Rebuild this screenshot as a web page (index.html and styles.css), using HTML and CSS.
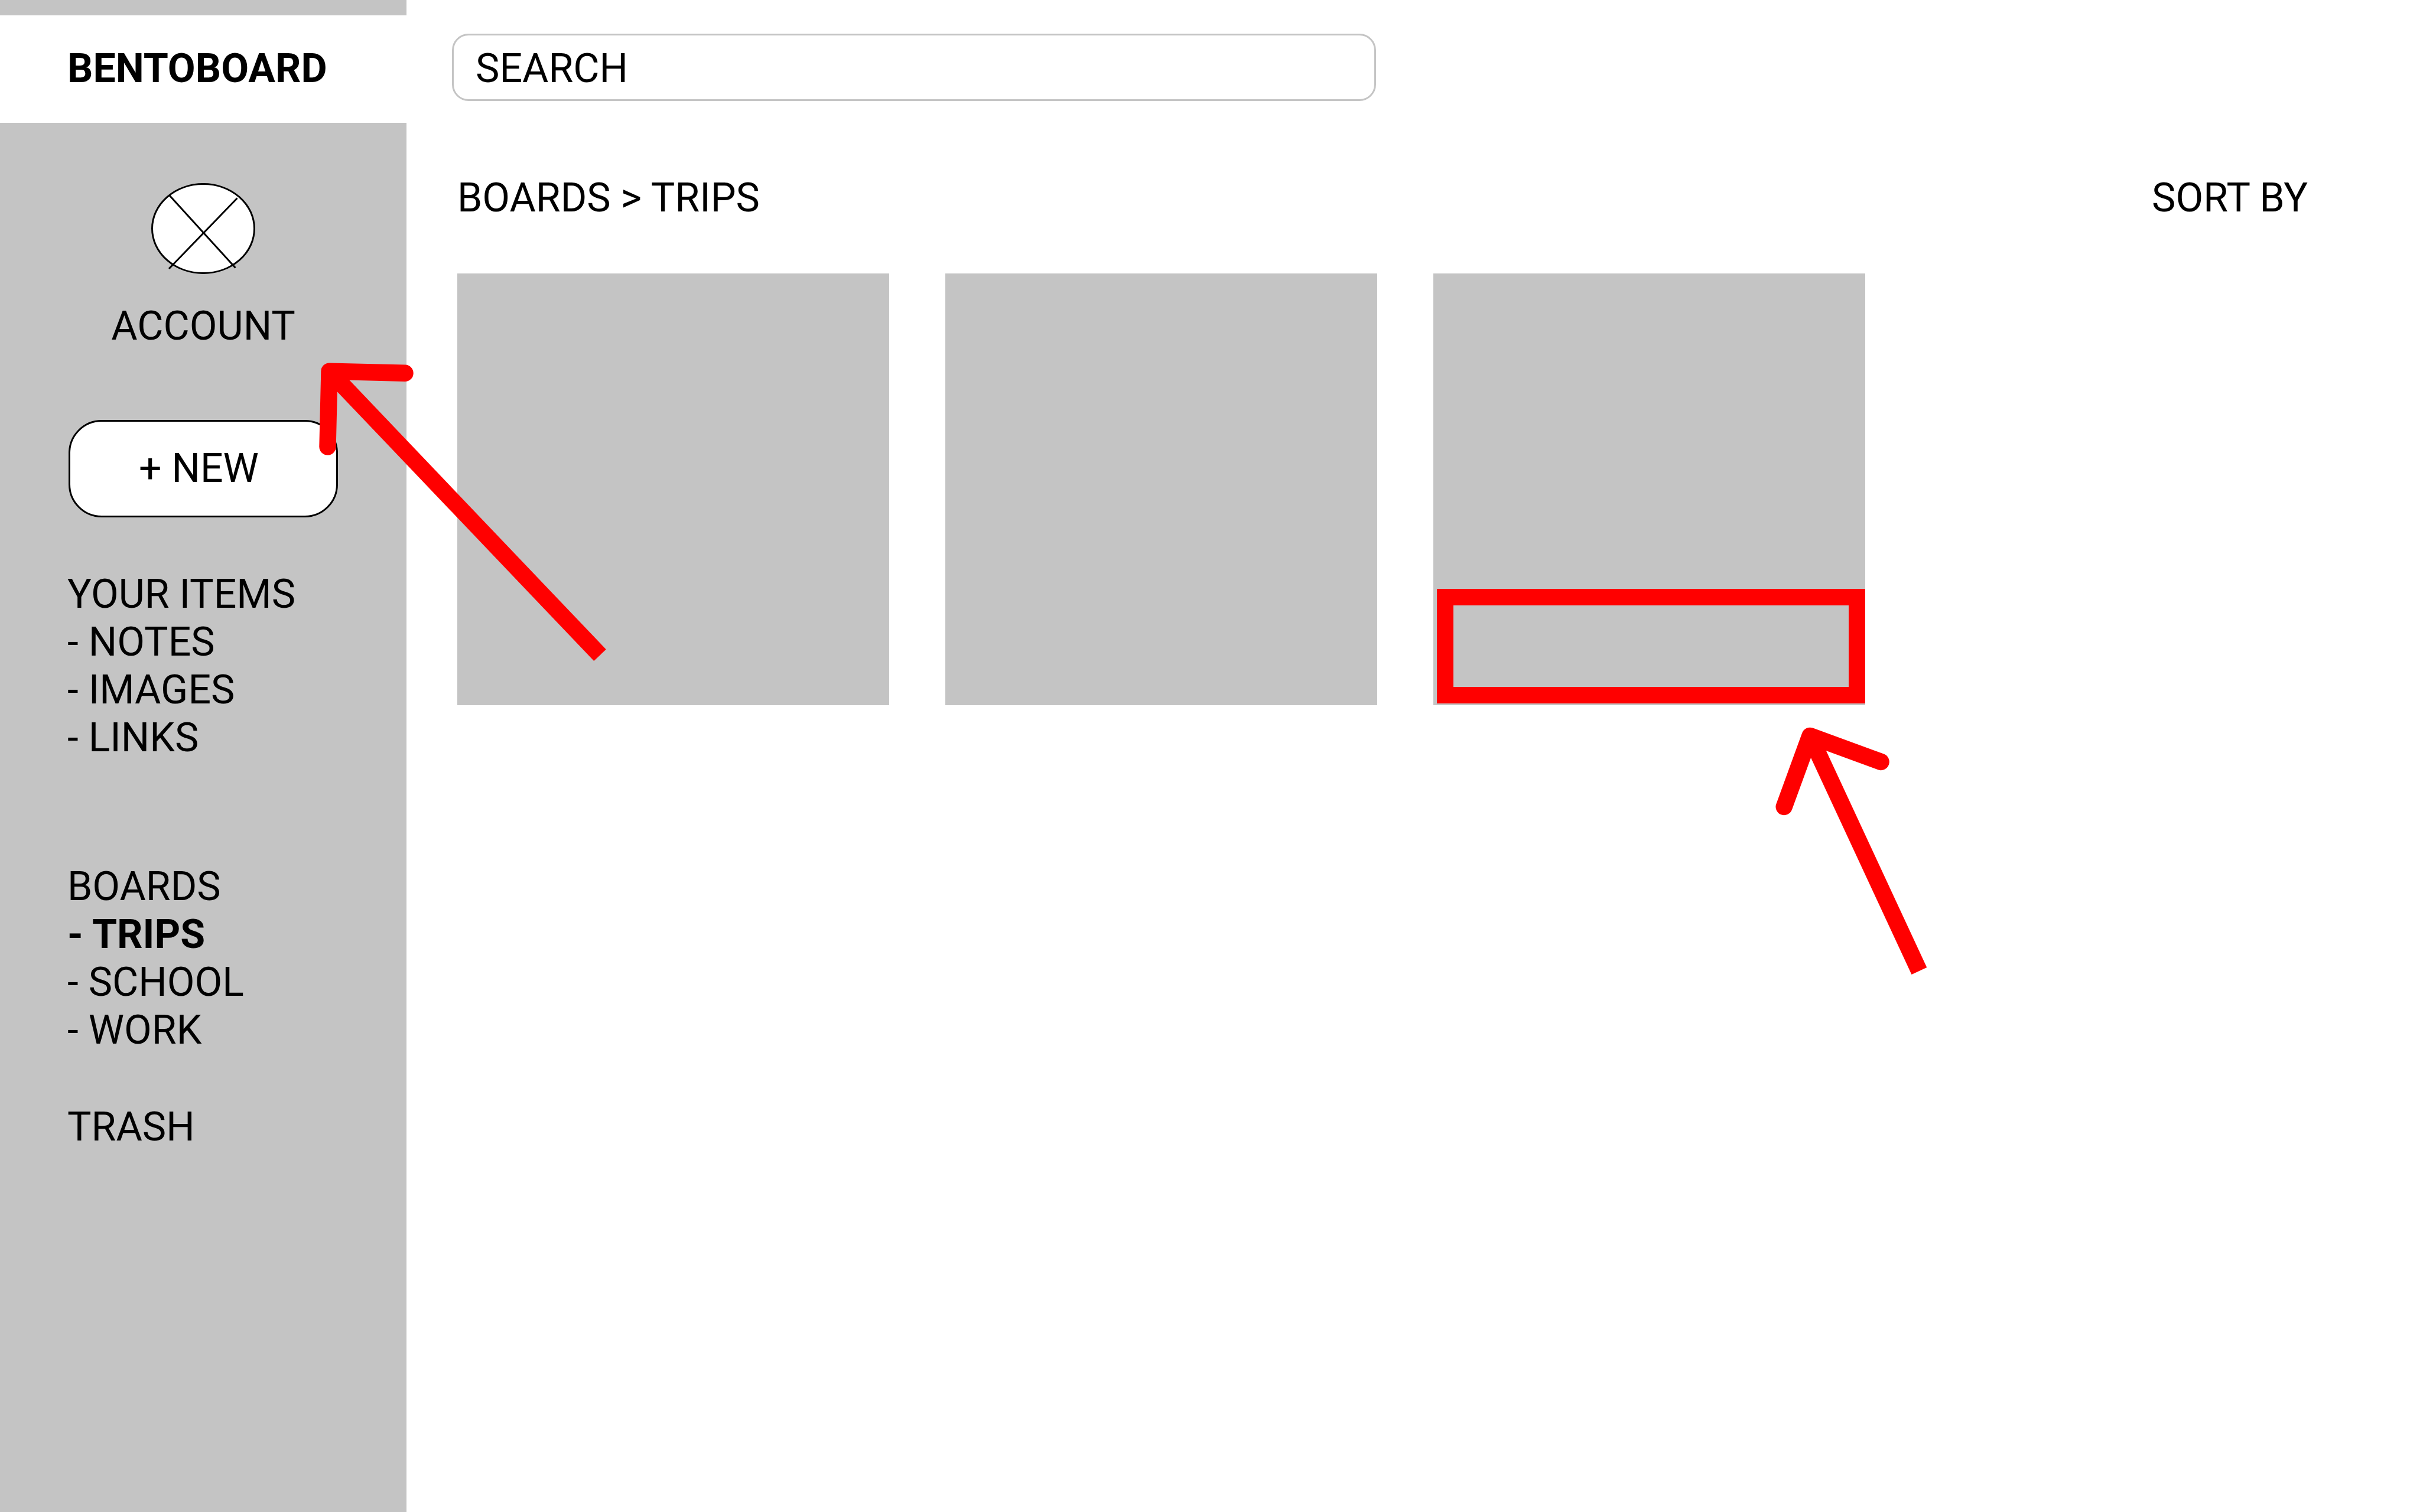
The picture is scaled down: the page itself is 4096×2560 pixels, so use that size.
FILE: index.html
```html
<!DOCTYPE html>
<html lang="en">
<head>
  <meta charset="utf-8">
  <meta name="viewport" content="width=device-width, initial-scale=1">
  <title>Bentoboard – Trips</title>
  <link rel="stylesheet" href="styles.css">
</head>
<body>
  <div class="app">
    <aside class="sidebar">
      <h1 class="brand">BENTOBOARD</h1>
      <a class="account" href="#account">
        <svg class="avatar" viewBox="0 0 176 154" aria-hidden="true">
          <ellipse cx="88" cy="77" rx="86.5" ry="75.5" fill="#fff"/>
          <path d="M31 21 142.5 143.5M145.5 25.5 30 145"/>
        </svg>
        <span>ACCOUNT</span>
      </a>
      <button class="new-button" type="button">+ NEW</button>
      <nav class="nav">
        <section class="nav-group">
          <h2 class="nav-title">YOUR ITEMS</h2>
          <a href="#notes">- NOTES</a>
          <a href="#images">- IMAGES</a>
          <a href="#links">- LINKS</a>
        </section>
        <section class="nav-group nav-boards">
          <h2 class="nav-title">BOARDS</h2>
          <a class="current" href="#trips" aria-current="page">- TRIPS</a>
          <a href="#school">- SCHOOL</a>
          <a href="#work">- WORK</a>
        </section>
        <a class="nav-trash" href="#trash">TRASH</a>
      </nav>
    </aside>

    <main class="main">
      <input class="search" type="search" placeholder="SEARCH" aria-label="Search">
      <div class="toolbar">
        <div class="breadcrumb">BOARDS &gt; TRIPS</div>
        <button class="sort" type="button">SORT BY</button>
      </div>
      <div class="cards">
        <article class="card"></article>
        <article class="card"></article>
        <article class="card"><div class="highlight"></div></article>
      </div>
    </main>

    <svg class="arrow arrow-account" viewBox="0 0 500 520" aria-hidden="true">
      <path stroke-linecap="round" d="M145.5 21.8 17.5 18.6 14.5 146.4"/>
      <path d="M17.5 18.6 475.5 499.3"/>
    </svg>
    <svg class="arrow arrow-card" viewBox="0 0 270 430" aria-hidden="true">
      <path stroke-linecap="round" d="M183.6 59.9 63.5 15.9 19.7 136"/>
      <path d="M63.5 15.9 248.4 414.1"/>
    </svg>
  </div>
</body>
</html>
```

FILE: styles.css
```css
:root {
  --gray: #c4c4c4;
  --mark: #ff0000;
}

* {
  box-sizing: border-box;
}

body {
  margin: 0;
  background: #fff;
  color: #000;
  font: 400 68px/81px Roboto, "Liberation Sans", sans-serif;
}

a {
  color: inherit;
  text-decoration: none;
}

button,
input {
  font: inherit;
  color: inherit;
}

.app {
  position: relative;
  display: flex;
  min-height: 100vh;
}

/* Sidebar */
.sidebar {
  flex: 0 0 688px;
  display: flex;
  flex-direction: column;
  padding-top: 26px;
  background: var(--gray);
}

.brand {
  margin: 0;
  padding: 50px 114px 51px;
  background: #fff;
  font-size: inherit;
  font-weight: 700;
}

.account {
  display: flex;
  flex-direction: column;
  align-items: center;
  gap: 48px;
  margin-top: 102px;
}

.avatar {
  width: 176px;
  height: 154px;
  fill: none;
  stroke: #000;
  stroke-width: 3;
}

.new-button {
  margin: 118px 116px 0;
  padding: 39px 116px;
  border: 3px solid #000;
  border-radius: 56px;
  background: #fff;
  text-align: left;
}

.nav {
  display: flex;
  flex-direction: column;
  margin-top: 90px;
  padding: 0 114px;
}

.nav-group {
  display: flex;
  flex-direction: column;
}

.nav-title {
  margin: 0;
  font-size: inherit;
  font-weight: 400;
}

.nav-boards {
  margin-top: 171px;
}

.current {
  font-weight: 700;
}

.nav-trash {
  margin-top: 83px;
}

/* Main area */
.main {
  flex: 1;
  padding: 57px 190px 57px 77px;
}

.search {
  display: block;
  width: 100%;
  max-width: 1564px;
  height: 114px;
  padding: 15px 37px 12px;
  border: 3px solid var(--gray);
  border-radius: 28px;
  background: #fff;
  appearance: none;
}

.search::placeholder {
  color: inherit;
  opacity: 1;
}

.toolbar {
  display: flex;
  justify-content: space-between;
  margin-top: 124px;
  padding-left: 9px;
}

.sort {
  padding: 0;
  border: 0;
  background: none;
}

.cards {
  display: grid;
  grid-template-columns: repeat(auto-fill, 731px);
  gap: 95px;
  margin-top: 87px;
  padding-left: 9px;
}

.card {
  position: relative;
  aspect-ratio: 1;
  background: var(--gray);
}

/* Annotations drawn over the wireframe */
.highlight {
  position: absolute;
  right: 0;
  bottom: 3px;
  left: 6px;
  height: 194px;
  border: 28px solid var(--mark);
}

.arrow {
  position: absolute;
  fill: none;
  stroke: var(--mark);
  stroke-width: 28.4;
  stroke-linejoin: round;
  pointer-events: none;
}

.arrow-account {
  top: 610px;
  left: 540px;
  width: 500px;
  height: 520px;
}

.arrow-card {
  top: 1230px;
  left: 3000px;
  width: 270px;
  height: 430px;
}
```
